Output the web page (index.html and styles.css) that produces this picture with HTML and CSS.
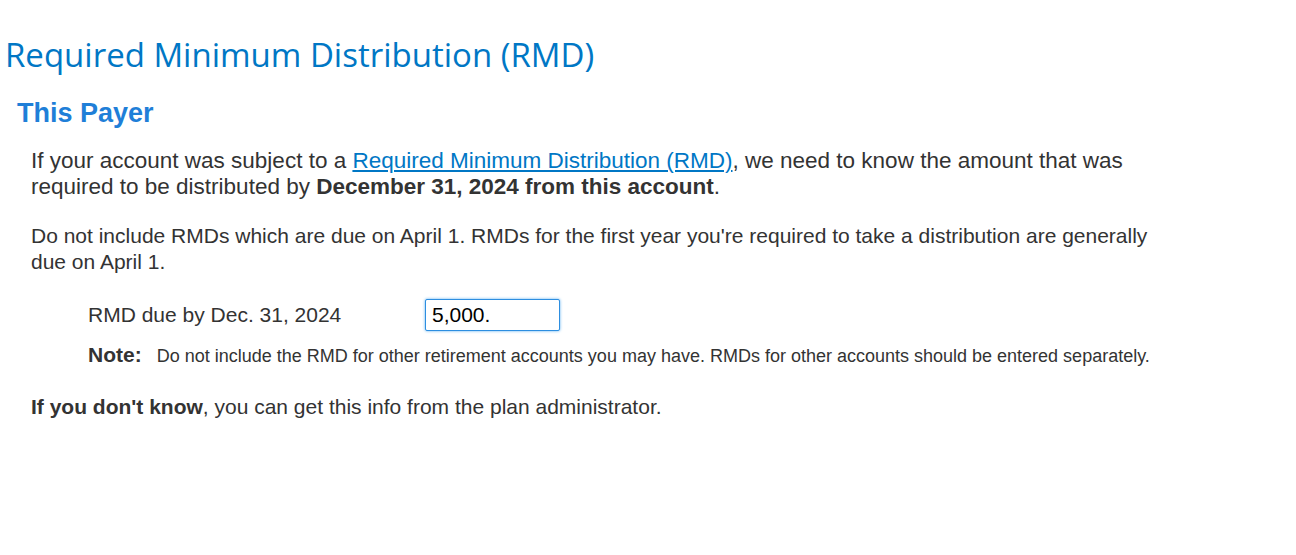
FILE: index.html
```html
<!DOCTYPE html>
<html lang="en">
<head>
    <meta charset="UTF-8">
    <title>Required Minimum Distribution (RMD)</title>
    <link rel="stylesheet" href="styles.css">
</head>
<body>
    <h1 class="page-title">Required Minimum Distribution (RMD)</h1>
    <h2 class="payer">This Payer</h2>

    <div class="content">
        <p class="intro">
            If your account was subject to a <a href="#">Required Minimum Distribution (RMD)</a>, we need to know the amount that was
            required to be distributed by <b>December 31, 2024 from this account</b>.
        </p>
        <p class="info">
            Do not include RMDs which are due on April 1. RMDs for the first year you're required to take a distribution are generally
            due on April 1.
        </p>

        <div class="field-row">
            <label for="rmdAmount">RMD due by Dec. 31, 2024</label>
            <input id="rmdAmount" type="text" value="5,000.">
        </div>
        <div class="note">
            <b>Note:</b>
            <span>Do not include the RMD for other retirement accounts you may have. RMDs for other accounts should be entered separately.</span>
        </div>

        <p class="dont-know"><b>If you don't know</b>, you can get this info from the plan administrator.</p>
    </div>
</body>
</html>
```

FILE: styles.css
```css
body {
    margin: 0;
    padding: 0;
    font-family: "Liberation Sans", Arial, sans-serif;
    color: #333;
    background: #fff;
}
.page-title {
    margin: 0;
    padding: 35px 0 0 5px;
    font-family: "Open Sans", "Noto Sans", sans-serif;
    font-weight: 400;
    font-size: 33px;
    line-height: 40px;
    color: #0077c5;
}
.payer {
    margin: 22px 0 0 17px;
    font-size: 27px;
    line-height: 32px;
    color: #1f7fd8;
}
.content {
    padding: 0 0 0 31px;
    width: 1130px;
}
.intro {
    margin: 19px 0 0;
    font-size: 22.5px;
    line-height: 26px;
}
.intro a {
    color: #0077c5;
}
.info {
    margin: 23px 0 0;
    font-size: 21px;
    line-height: 26px;
}
.field-row {
    display: flex;
    align-items: center;
    margin: 24px 0 0 57px;
}
.field-row label {
    width: 337px;
    font-size: 21px;
}
.field-row input {
    box-sizing: border-box;
    width: 135px;
    height: 32px;
    padding: 0 6px;
    font-family: "Liberation Sans", Arial, sans-serif;
    font-size: 21px;
    color: #000;
    border: 1px solid #2d8ee0;
    border-radius: 2px;
    box-shadow: 0 0 3px #5aaef0;
    outline: none;
}
.note {
    margin: 12px 0 0 57px;
    display: flex;
    align-items: baseline;
    gap: 15px;
    font-size: 18px;
    line-height: 24px;
    white-space: nowrap;
}
.note b {
    font-size: 21px;
}
.dont-know {
    margin: 26px 0 0;
    font-size: 21px;
    line-height: 26px;
}
```
